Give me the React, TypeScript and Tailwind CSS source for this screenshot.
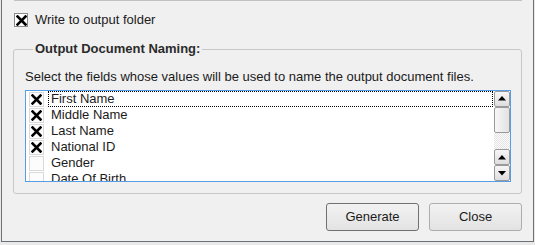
import React from "react";

const font = { fontFamily: '"Liberation Sans", Arial, sans-serif' };

const Cross = () => (
  <svg width="11" height="11" viewBox="0 0 11 11">
    <path d="M1.5 1.5 L9.5 9.5 M9.5 1.5 L1.5 9.5" stroke="#000" strokeWidth="2.6" strokeLinecap="square" />
  </svg>
);

const Arrow = ({ down }: { down?: boolean }) => (
  <svg width="8" height="5" viewBox="0 0 8 5">
    <path d={down ? "M0 0 L8 0 L4 4.5 Z" : "M0 4.5 L8 4.5 L4 0 Z"} fill="#000" />
  </svg>
);

const ScrollButton = ({ down }: { down?: boolean }) => (
  <div className="h-[16px] flex items-center justify-center border border-[#9a9a9a] rounded-[2px] bg-gradient-to-b from-[#f6f6f6] to-[#dedede]">
    <Arrow down={down} />
  </div>
);

const fields = [
  { name: "First Name", checked: true },
  { name: "Middle Name", checked: true },
  { name: "Last Name", checked: true },
  { name: "National ID", checked: true },
  { name: "Gender", checked: false },
  { name: "Date Of Birth", checked: false },
];

export default function App() {
  return (
    <div className="w-[535px] h-[245px] bg-[#e9e9e9] text-[13px] text-[#1b1b1b]" style={font}>
      <div className="ml-[1px] w-[533px] h-[242px] border-l border-r border-b border-[#6b7078] bg-[#f0f0f0] flex flex-col">
        <div className="ml-[12px] w-[508px] h-px bg-[#c2c2c2]" />

        <div className="mt-[12px] ml-[12px] flex items-center h-[14px]">
          <div className="w-[14px] h-[14px] border border-[#8a8a8a] bg-white flex items-center justify-center">
            <Cross />
          </div>
          <span className="ml-[7px] leading-[16px]">Write to output folder</span>
        </div>

        <fieldset className="mt-[14px] ml-[11px] w-[509px] border border-[#c7c7c7] rounded-[3px] pl-[11px] pr-[10px] pb-[11px]">
          <legend className="ml-[8px] px-[2px] font-bold leading-[16px] text-[#2b2b2b]">Output Document Naming:</legend>
          <div className="mt-[12px] leading-[16px]">
            Select the fields whose values will be used to name the output document files.
          </div>
          <div className="mt-[5px] h-[92px] border border-[#569de5] bg-white flex overflow-hidden">
            <div className="flex-1 flex flex-col">
              {fields.map((f, i) => (
                <div key={f.name} className="h-[16px] shrink-0 flex items-center">
                  <div className="ml-[3px] w-[15px] h-[15px] border border-[#d9d9d9] bg-[#fcfcfc] flex items-center justify-center">
                    {f.checked && <Cross />}
                  </div>
                  <div
                    className={
                      "ml-[4px] mr-[1px] flex-1 h-[16px] pl-[2px] flex items-center leading-[16px] border " +
                      (i === 0 ? "border-dotted border-black" : "border-transparent")
                    }
                  >
                    {f.name}
                  </div>
                </div>
              ))}
            </div>
            <div className="w-[16px] flex flex-col">
              <ScrollButton />
              <div className="h-[26px] border border-[#9a9a9a] rounded-[2px] bg-gradient-to-r from-[#f7f7f7] to-[#e2e2e2]" />
              <div className="h-[17px] bg-[repeating-conic-gradient(#e4e4e4_0_25%,#fbfbfb_0_50%)] bg-[length:2px_2px]" />
              <ScrollButton />
              <ScrollButton down />
            </div>
          </div>
        </fieldset>

        <div className="mt-[9px] pr-[11px] flex justify-end gap-[10px]">
          <button className="w-[93px] h-[28px] border border-[#707070] rounded-[3px] bg-gradient-to-b from-[#f2f2f2] to-[#e3e3e3]">
            Generate
          </button>
          <button className="w-[93px] h-[28px] border border-[#adadad] rounded-[3px] bg-gradient-to-b from-[#f2f2f2] to-[#e3e3e3]">
            Close
          </button>
        </div>
      </div>
    </div>
  );
}
